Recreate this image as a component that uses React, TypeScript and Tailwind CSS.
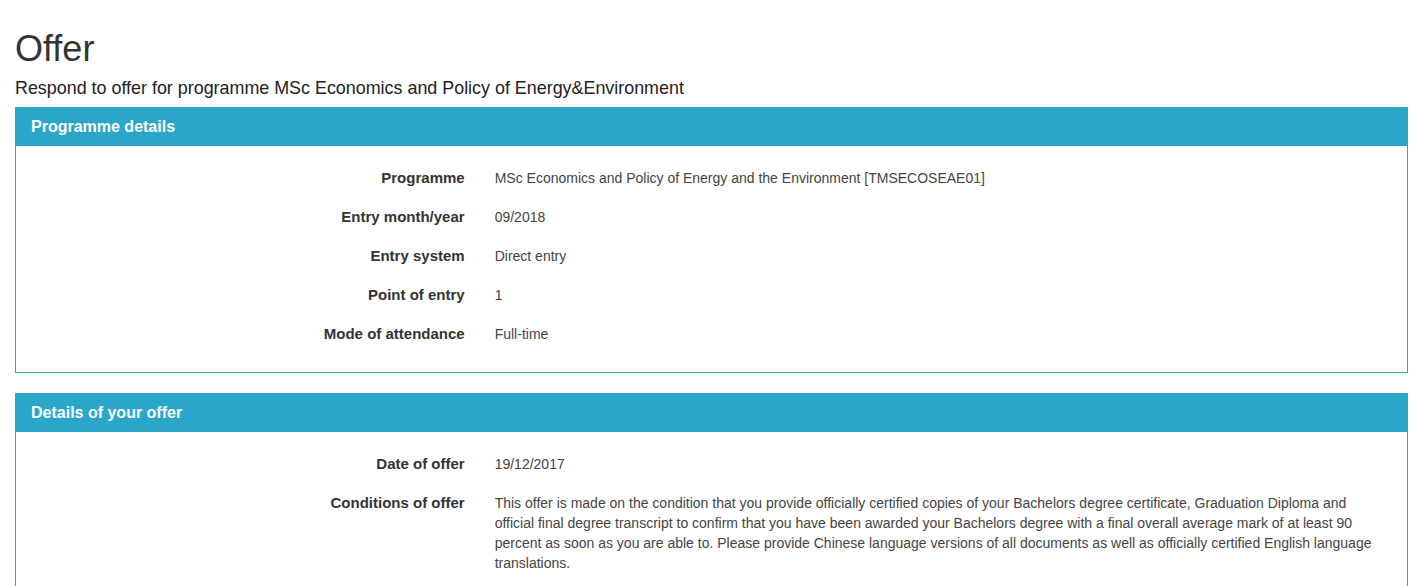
const programmeRows = [
  { label: "Programme", value: "MSc Economics and Policy of Energy and the Environment [TMSECOSEAE01]" },
  { label: "Entry month/year", value: "09/2018" },
  { label: "Entry system", value: "Direct entry" },
  { label: "Point of entry", value: "1" },
  { label: "Mode of attendance", value: "Full-time" },
];

const offerRows = [
  { label: "Date of offer", value: "19/12/2017" },
  {
    label: "Conditions of offer",
    value:
      "This offer is made on the condition that you provide officially certified copies of your Bachelors degree certificate, Graduation Diploma and official final degree transcript to confirm that you have been awarded your Bachelors degree with a final overall average mark of at least 90 percent as soon as you are able to. Please provide Chinese language versions of all documents as well as officially certified English language translations.",
  },
];

type Row = { label: string; value: string };

const Panel = ({ title, rows }: { title: string; rows: Row[] }) => (
  <div className="mb-5 border border-[#2ba3c8] bg-white">
    <div className="bg-[#2ba6cb] px-[15px] h-[38px] flex items-center text-white font-bold text-[16px]">
      {title}
    </div>
    <div className="pt-[22px] pb-[28px]">
      {rows.map((r) => (
        <div key={r.label} className="flex text-[14px] leading-5 mb-[19px] last:mb-0">
          <div className="w-1/3 shrink-0 pr-[15px] text-right font-bold text-[15px] text-[#333]">{r.label}</div>
          <div className="flex-1 pl-[15px] pr-[15px]">
            <div className="max-w-[878px] text-[#444]">{r.value}</div>
          </div>
        </div>
      ))}
    </div>
  </div>
);

export default function App() {
  return (
    <div className="min-h-screen bg-white pl-[15px] pr-[5px] text-[#333]" style={{ fontFamily: '"Liberation Sans", Arial, sans-serif' }}>
      <h1 className="pt-[29px] text-[36px] leading-[40px] font-normal text-[#333]">Offer</h1>
      <p className="mt-[8px] mb-[8px] text-[17.9px] leading-[22px] text-[#222]">
        Respond to offer for programme MSc Economics and Policy of Energy&amp;Environment
      </p>
      <Panel title="Programme details" rows={programmeRows} />
      <Panel title="Details of your offer" rows={offerRows} />
    </div>
  );
}
